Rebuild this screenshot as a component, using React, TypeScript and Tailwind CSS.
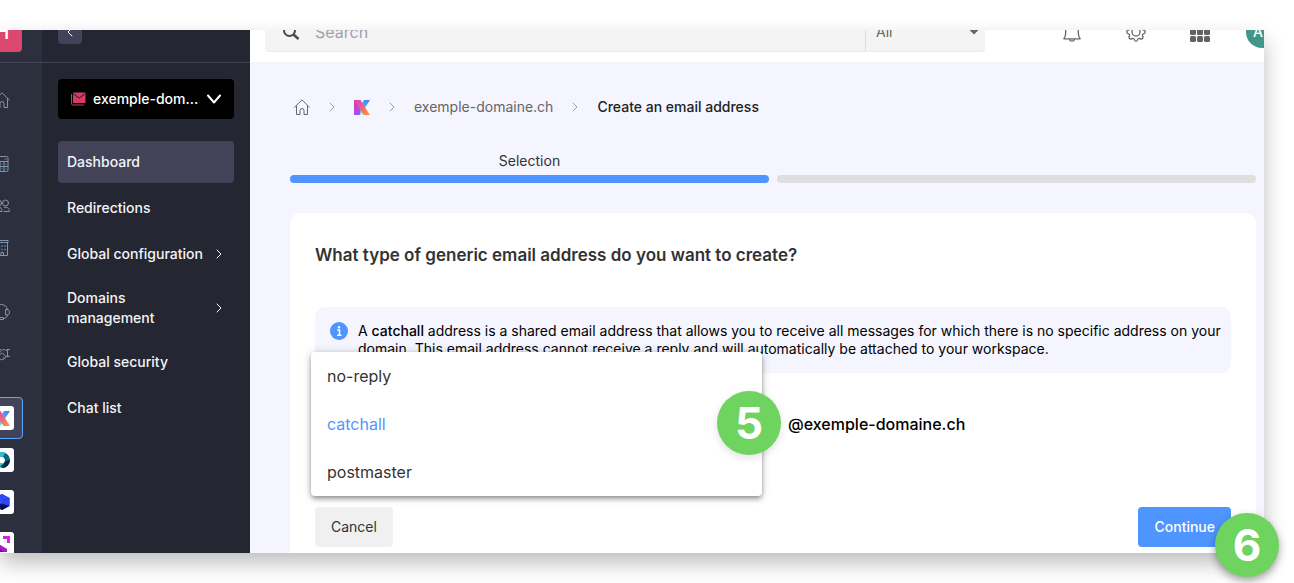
import { useState } from 'react';
import type { ReactNode } from 'react';
import clsx from 'clsx';

const navItems = [
  { label: 'Dashboard', active: true },
  { label: 'Redirections' },
  { label: 'Global configuration', nested: true },
  { label: 'Domains management', nested: true },
  { label: 'Global security' },
  { label: 'Chat list' },
];

const addressTypes = ['no-reply', 'catchall', 'postmaster'];

function Chevron({ className }: { className?: string }) {
  return (
    <svg viewBox="0 0 6 10" className={clsx('h-[10px] w-[6px] shrink-0', className)} fill="none" stroke="currentColor" strokeLinecap="round" strokeLinejoin="round">
      <path d="M1 1l4 4-4 4" />
    </svg>
  );
}

function LineIcon({ children }: { children: ReactNode }) {
  return (
    <svg viewBox="0 0 16 16" className="size-4 shrink-0" fill="none" stroke="currentColor" strokeLinecap="round" strokeLinejoin="round">
      {children}
    </svg>
  );
}

function HomeIcon() {
  return (
    <LineIcon>
      <path d="M.5 8.300L8 .8l7.500 7.500M2.500 6.800v8.700h3.500v-4a2 2 0 0 1 4 0v4h3.500V6.800" />
    </LineIcon>
  );
}

function KLogo() {
  return (
    <svg viewBox="0 0 16 15" className="h-[15px] w-4 shrink-0">
      <defs>
        <linearGradient id="k-stem" x1="0" y1="0" x2="0" y2="1">
          <stop offset="0" stopColor="#d83cae" />
          <stop offset="1" stopColor="#a64dff" />
        </linearGradient>
        <linearGradient id="k-arm" x1="1" y1="0" x2="0" y2="1">
          <stop offset="0" stopColor="#3f74ff" />
          <stop offset="1" stopColor="#4fe3f5" />
        </linearGradient>
        <linearGradient id="k-leg" x1="0" y1="0" x2="1" y2="1">
          <stop offset="0" stopColor="#dc3fc0" />
          <stop offset=".5" stopColor="#f2607f" />
          <stop offset="1" stopColor="#ffa038" />
        </linearGradient>
      </defs>
      <path d="M0 0h6v15H0z" fill="url(#k-stem)" />
      <path d="M10 0h6L6 15V6z" fill="url(#k-arm)" />
      <path d="M0 0h6.500L16 15H9.500z" fill="url(#k-leg)" />
    </svg>
  );
}

function RailItem({ active, children }: { active?: boolean; children: ReactNode }) {
  return (
    <a
      href="#"
      className={clsx(
        'flex size-[42px] items-center justify-center rounded text-[#8296ad]',
        active && 'border border-[#5da4ff] bg-[#424359]'
      )}
    >
      {children}
    </a>
  );
}

function AppTile({ children }: { children: ReactNode }) {
  return <span className="flex size-6 items-center justify-center rounded-[3px] bg-white">{children}</span>;
}

function Rail() {
  return (
    <div className="-ml-[38px] w-20 shrink-0 bg-[#2c2f3e]">
      <div className="-mt-7 flex h-[61px] items-center justify-center border-b border-[#424359]">
        <div className="flex size-10 items-center justify-center rounded bg-[#dc476f] text-xl font-medium text-white">H</div>
      </div>
      <div className="flex flex-col items-center gap-[22px] pt-4">
        <RailItem><HomeIcon /></RailItem>
        <div>
          <RailItem>
            <LineIcon>
              <path d="M2 .5h10.500a1.500 1.500 0 0 1 1.500 1.500v12a1.500 1.500 0 0 1-1.500 1.500H2M2 5.500h12M6 5.500v10M10 5.500v10M6 10.500h8M2 10.500h4M8 13h.1M11.800 13h.1M8 8h.1M11.800 8h.1M11 3h1" />
            </LineIcon>
          </RailItem>
          <RailItem>
            <LineIcon>
              <circle cx="4.500" cy="5" r="3" />
              <circle cx="11.500" cy="5" r="3" />
              <path d="M1 13.500c0-3 1.500-4.500 3.500-4.500s3.500 1.500 3.500 4.500H1M10 9.300c3.500-.8 5.500 1.200 5.500 4.200H10" />
            </LineIcon>
          </RailItem>
          <RailItem>
            <LineIcon>
              <path d="M1 .5h13v2H1zM1.500 2.500v13h12v-13M5 5.500v1M8 5.500v1M11 5.500v1M5 9v1M8 9v1M11 9v1M7 15.500v-3h2.500v3" />
            </LineIcon>
          </RailItem>
        </div>
        <div>
          <RailItem>
            <LineIcon>
              <path d="M1.500 6C2 2.500 4.500.5 7.500.5S13 2.500 13.500 6M12 5.500h1.500c1.200 0 2 1 2 2.500s-.8 3-2 3H12zM13.500 11c0 2-1.500 3.500-4 3.500M6 13.500h3.500v2H6z" />
            </LineIcon>
          </RailItem>
          <RailItem>
            <LineIcon>
              <path d="M15.500 3.500h-2l-2 .8C9.500 3 8 3.500 6.500 5.500L5 7.500c1 1.200 2.500.8 3.500-.7L12 11l2-.7h1.500M13.500 3.500v7M12 11c-.5 1.500-2 1.500-3 2.500-1.500 1-3-.5-4.500-2L1 8.500M9 11.500l1.500 1.200M6.500 3.500L3 4.500l-2-1" />
            </LineIcon>
          </RailItem>
        </div>
        <div>
          <RailItem active>
            <AppTile><KLogo /></AppTile>
          </RailItem>
          <RailItem>
            <AppTile>
              <svg viewBox="0 0 16 16" className="size-4">
                <path d="M8 0a8 8 0 0 0 0 16l1-5-4-3 4-3z" fill="#46c7dd" />
                <path d="M6 0h4l4 3-4 3-4-1z" fill="#3db7cd" />
                <path d="M11 1a8 8 0 0 1 5 7 8 8 0 0 1-8 8l-2-2 4-3 1-3-2-3z" fill="#10647c" />
                <path d="M16 8a8 8 0 0 1-8 8l2-5 2-2z" fill="#062b41" />
                <circle cx="7.500" cy="8" r="3" fill="#fff" />
              </svg>
            </AppTile>
          </RailItem>
          <RailItem>
            <AppTile>
              <svg viewBox="0 0 16 16" className="size-4">
                <path d="M8 0l7.500 4v8L8 16 .5 12V4z" fill="#2638dd" />
                <path d="M8 0l7.500 4L6 8 .5 4z" fill="#3345ff" />
                <path d="M15.500 4v8L6 8z" fill="#2a48ef" />
                <path d="M.5 5L8 8 .5 12z" fill="#4c70ff" />
                <path d="M.5 11l8-1 7 2L8 16 .5 12z" fill="#0a0f5c" />
              </svg>
            </AppTile>
          </RailItem>
          <RailItem>
            <AppTile>
              <svg viewBox="0 0 16 16" className="size-4">
                <path d="M9 0h7v7h-3V3H9z" fill="#d91fe0" />
                <path d="M0 9h4l4 3 5 1v3H0z" fill="#4b0bb0" />
                <path d="M5 8l8 5v3H9L5 12z" fill="#b016c8" />
              </svg>
            </AppTile>
          </RailItem>
        </div>
      </div>
    </div>
  );
}

function Sidebar() {
  return (
    <aside className="w-52 shrink-0 bg-[#242631]">
      <div className="-mt-7 flex h-[61px] items-center border-b border-[#424359] px-4">
        <button aria-label="Collapse menu" className="flex size-6 items-center justify-center rounded bg-[#424359] text-white">
          <Chevron className="rotate-180" />
        </button>
      </div>
      <div className="px-4 pt-4">
        <button className="flex h-10 w-full items-center rounded bg-black pr-3 pl-[13px] text-sm font-medium text-white">
          <svg viewBox="0 0 16 14" className="mr-[6px] h-[14px] w-4 shrink-0">
            <path d="M.5 2v9.500a1.500 1.500 0 0 0 1.500 1.500h11" fill="none" stroke="#c93a60" />
            <path d="M2 .500h12.500v10.500H2z" fill="#d03c64" />
            <path d="M2 1.500l6.200 4.500 6.300-4.500" fill="none" stroke="#33101a" />
          </svg>
          <span className="flex-1 text-left">exemple-dom...</span>
          <svg viewBox="0 0 16 10" className="h-[10px] w-4" fill="none" stroke="currentColor" strokeWidth="2" strokeLinecap="round" strokeLinejoin="round">
            <path d="M2 1.500l6 7 6-7" />
          </svg>
        </button>
        <nav className="mt-[22px] flex flex-col gap-1">
          {navItems.map((item) => (
            <a
              key={item.label}
              href="#"
              className={clsx(
                'flex min-h-[42px] items-center justify-between rounded px-[9px] py-[9px] text-sm font-medium text-[#f4f4f7]',
                item.active && 'bg-[#424359]'
              )}
            >
              <span className="max-w-36">{item.label}</span>
              {item.nested && <Chevron className="mr-[3px]" />}
            </a>
          ))}
        </nav>
      </div>
    </aside>
  );
}

function Header() {
  return (
    <header className="-mt-7 -mr-[14px] flex h-[60px] shrink-0 items-center bg-white pl-[15px] text-[#666]">
      <div className="flex h-10 flex-1 items-center rounded border-b border-[#ececec] bg-[#f4f4f4]">
        <svg viewBox="0 0 18 18" className="ml-[17px] size-[18px]" fill="none" stroke="#4a4a4a" strokeWidth="2">
          <circle cx="7.500" cy="7.500" r="5.500" />
          <path d="M11.500 11.500l5 4.500" strokeWidth="2.500" />
        </svg>
        <input type="text" aria-label="Search" placeholder="Search" className="ml-[15px] min-w-0 flex-1 bg-transparent text-base outline-none placeholder:text-[#9ea1ad]" />
        <div className="relative h-full w-[120px] border-l border-[#dcdcdc]">
          <select aria-label="Search scope" className="size-full appearance-none bg-transparent pl-[10px] text-sm outline-none">
            <option>All</option>
          </select>
          <svg viewBox="0 0 10 5" className="pointer-events-none absolute top-1/2 right-[6px] h-[5px] w-[10px] -translate-y-1/2">
            <path d="M0 0h10L5 5z" fill="#666" />
          </svg>
        </div>
      </div>
      <div className="ml-[77px] flex gap-11">
        <button aria-label="Notifications">
          <svg viewBox="0 0 20 20" className="size-5" fill="none" stroke="currentColor" strokeWidth="1.300" strokeLinejoin="round">
            <path d="M1.800 16.800h16.400c-1.200-1.600-1.900-3.200-1.900-5.800V9A6.300 6.300 0 0 0 3.700 9v2c0 2.600-.7 4.200-1.900 5.800zM7.500 17c.4 2.800 4.600 2.800 5 0M10 2.700V.7" />
          </svg>
        </button>
        <button aria-label="Settings">
          <svg viewBox="0 0 20 20" className="size-5" fill="none" stroke="currentColor" strokeWidth="1.300" strokeLinejoin="round">
            <circle cx="10" cy="10" r="4" />
            <path d="M8.400 2.500c.4-2.400 2.800-2.400 3.200 0 .3 1 1.400 1.400 2.300.9 2.100-1.300 3.800.5 2.700 2.500-.5.900-.1 2 .9 2.300 2.400.6 2.400 3 0 3.600-1 .3-1.400 1.400-.9 2.300 1.100 2-.6 3.800-2.700 2.500-.9-.5-2-.1-2.300.9-.4 2.400-2.800 2.400-3.200 0-.3-1-1.400-1.400-2.300-.9-2.100 1.300-3.800-.5-2.700-2.500.5-.9.100-2-.9-2.300-2.400-.6-2.400-3 0-3.600 1-.3 1.400-1.400.9-2.300-1.100-2 .6-3.800 2.700-2.500.9.500 2 .1 2.300-.9z" />
          </svg>
        </button>
        <button aria-label="Applications">
          <svg viewBox="0 0 20 20" className="size-5" fill="#616161">
            {[0, 7, 14].map((y) => [0, 7, 14].map((x) => <rect key={`${x}-${y}`} x={x} y={y} width="6" height="6" rx="1.500" />))}
          </svg>
        </button>
      </div>
      <button aria-label="Account" className="ml-9 size-8 rounded-full bg-[#43968a] pl-[7px] text-left text-sm font-medium text-white">A</button>
    </header>
  );
}

function StepBadge({ step, className }: { step: number; className: string }) {
  return (
    <span className={clsx('absolute z-20 flex size-16 items-center justify-center rounded-full bg-[#6fd35f] text-[44px] font-bold text-white', className)}>
      {step}
    </span>
  );
}

function Breadcrumb() {
  return (
    <nav aria-label="Breadcrumb" className="flex h-5 items-center gap-[19px] pl-1 text-sm text-[#666]">
      <a href="#" aria-label="Home"><HomeIcon /></a>
      <Chevron className="text-[#9f9f9f]" />
      <a href="#" aria-label="Product"><KLogo /></a>
      <Chevron className="text-[#9f9f9f]" />
      <a href="#">exemple-domaine.ch</a>
      <Chevron className="text-[#9f9f9f]" />
      <span className="font-medium text-[#222]">Create an email address</span>
    </nav>
  );
}

export default function App() {
  const [type, setType] = useState('catchall');

  return (
    <div className="relative flex h-screen flex-col overflow-hidden bg-white py-[30px] pr-[30px] font-['Inter',sans-serif]">
      <div className="flex min-h-0 flex-1 shadow-[0_10px_20px_rgba(0,0,0,0.26)]">
        <div className="flex min-w-0 flex-1 overflow-hidden">
          <Rail />
          <Sidebar />
          <div className="flex min-w-0 flex-1 flex-col bg-[#f4f5fe]">
            <Header />
            <main className="shrink-0 pt-[35px] pr-2 pl-10">
              <Breadcrumb />

              <div className="mt-[34px] grid grid-cols-2 gap-2 text-center text-sm text-[#333]">
                <div>
                  <p>Selection</p>
                  <div className="mt-1 h-2 rounded-full bg-[#4f95ff]" />
                </div>
                <div className="h-2 self-end rounded-full bg-[#dfdfdf]" />
              </div>

              <div className="mt-[30px] rounded-[10px] bg-white p-[25px]">
                <h1 className="pt-[3px] text-[17px] leading-7 font-semibold text-[#333]">What type of generic email address do you want to create?</h1>

                <div className="mt-[38px] flex gap-[10px] rounded-[10px] bg-[#f4f5fe] py-[15px] pr-1 pl-[15px] text-black">
                  <svg viewBox="0 0 18 18" className="size-[18px] shrink-0">
                    <circle cx="9" cy="9" r="9" fill="#4f95ff" />
                    <circle cx="9" cy="5.200" r="1.200" fill="#fff" />
                    <path d="M7.200 8h2.300v5M7 13.200h4.500" fill="none" stroke="#fff" strokeWidth="1.500" />
                  </svg>
                  <p className="text-sm leading-[18px]">
                    A <b className="font-medium">catchall</b> address is a shared email address that allows you to receive all messages for which there is no specific address on your domain. This email address cannot receive a reply and will automatically be attached to your workspace.
                  </p>
                </div>

                <div className="mt-[31px] flex items-center gap-[30px]">
                  <div className="relative w-[443px]">
                    <select
                      aria-label="Address type"
                      value={type}
                      onChange={(e) => setType(e.target.value)}
                      className="block h-10 w-full appearance-none rounded border border-[#e0e0e0] px-3 text-base"
                    >
                      {addressTypes.map((t) => <option key={t}>{t}</option>)}
                    </select>
                    <div className="absolute -inset-x-1 -top-[52px] z-10 rounded bg-white shadow-[0_2px_4px_-1px_rgba(0,0,0,0.3),0_4px_5px_rgba(0,0,0,0.14),0_1px_10px_rgba(0,0,0,0.2)]">
                      {addressTypes.map((t) => (
                        <button
                          key={t}
                          onClick={() => setType(t)}
                          className={clsx('block h-12 w-full px-4 text-left text-base', t === type ? 'text-[#4f95ff]' : 'text-[#333]')}
                        >
                          {t}
                        </button>
                      ))}
                    </div>
                    <StepBadge step={5} className="-top-[13px] -right-[23px] shadow-[0_3px_8px_rgba(0,0,0,0.12)]" />
                  </div>
                  <span className="text-base font-medium text-black">@exemple-domaine.ch</span>
                </div>

                <div className="mt-[63px] flex justify-between text-sm">
                  <button className="h-10 rounded bg-[#f0f0f0] px-4 text-[#333]">Cancel</button>
                  <button className="h-10 rounded bg-[#4f95ff] px-4 font-medium text-white">Continue</button>
                </div>
              </div>
            </main>
          </div>
        </div>
      </div>
      <StepBadge step={6} className="right-[15px] bottom-[6px] shadow-[0_4px_8px_rgba(0,0,0,0.35)]" />
    </div>
  );
}
